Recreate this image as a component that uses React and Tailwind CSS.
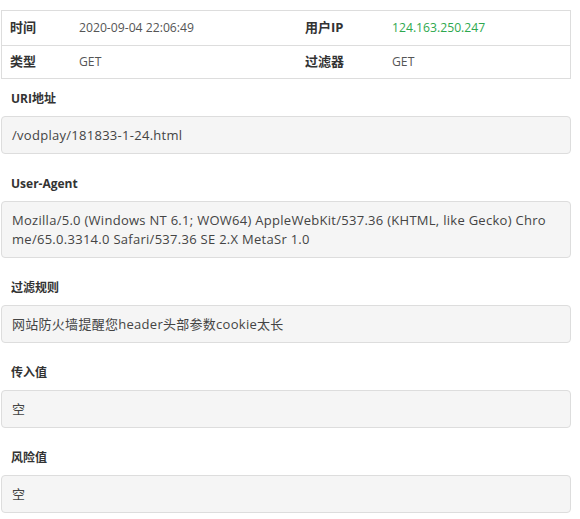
export default function App() {
  const font = {
    fontFamily: '"Open Sans", "Noto Sans CJK SC", sans-serif',
  };

  const sections = [
    { label: "URI地址", value: "/vodplay/181833-1-24.html" },
    {
      label: "User-Agent",
      value:
        "Mozilla/5.0 (Windows NT 6.1; WOW64) AppleWebKit/537.36 (KHTML, like Gecko) Chrome/65.0.3314.0 Safari/537.36 SE 2.X MetaSr 1.0",
    },
    { label: "过滤规则", value: "网站防火墙提醒您header头部参数cookie太长" },
    { label: "传入值", value: "空" },
    { label: "风险值", value: "空" },
  ];

  return (
    <div className="w-[580px] h-[519px] overflow-hidden bg-white text-[13px] text-[#333]" style={font}>
      <div className="pl-[1px] pt-[10px] w-[571px]">
        <div className="border border-[#ddd] grid grid-cols-[67px_226px_87px_1fr]">
          <div className="h-[34px] flex items-center pl-[8px] font-bold">时间</div>
          <div className="h-[34px] flex items-center pl-[10px] text-[12.2px] text-[#555]">2020-09-04 22:06:49</div>
          <div className="h-[34px] flex items-center pl-[10px] font-bold">用户IP</div>
          <div className="h-[34px] flex items-center pl-[10px] text-[12.2px] text-[#2ea84e]">124.163.250.247</div>
          <div className="h-[33px] flex items-center pl-[8px] font-bold border-t border-[#ddd]">类型</div>
          <div className="h-[33px] flex items-center pl-[10px] text-[12.2px] text-[#555] border-t border-[#ddd]">GET</div>
          <div className="h-[33px] flex items-center pl-[10px] font-bold border-t border-[#ddd]">过滤器</div>
          <div className="h-[33px] flex items-center pl-[10px] text-[12.2px] text-[#555] border-t border-[#ddd]">GET</div>
        </div>

        <div className="pt-[10px] flex flex-col gap-[20px]">
          {sections.map((s) => (
            <div key={s.label}>
              <div className="h-[20px] mb-[7px] flex items-center pl-[10px] font-bold text-[12px]">{s.label}</div>
              <div className="bg-[#f5f5f5] border border-[#ddd] rounded-[4px] pl-[10px] pr-[18px] pt-[9px] pb-[8px] leading-[19px] text-[#444] tracking-[0.28px] break-all">
                {s.value}
              </div>
            </div>
          ))}
        </div>
      </div>
    </div>
  );
}
